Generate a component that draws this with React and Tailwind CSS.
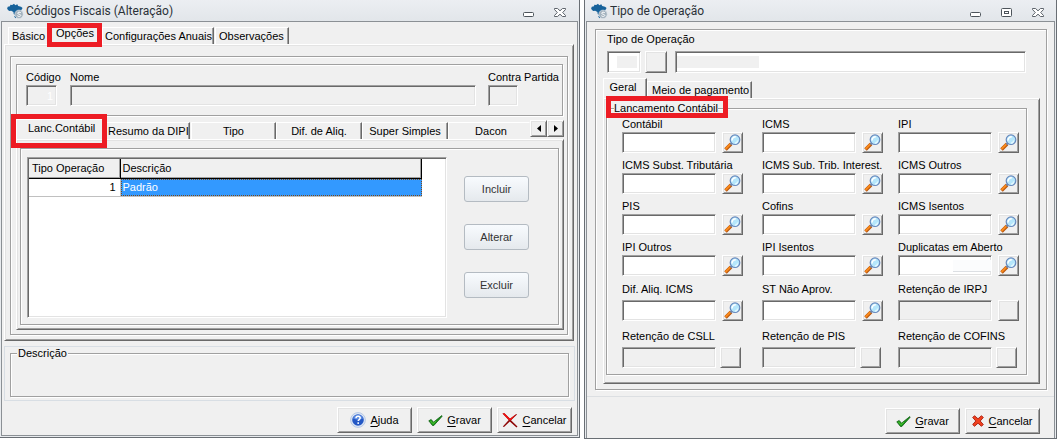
import { useState } from "react";

const ETCHED = "border border-[#a0a0a0] shadow-[1px_1px_0_#fff,inset_1px_1px_0_#fff]";
const SUNKEN =
  "border border-t-[#a0a0a0] border-l-[#a0a0a0] border-r-white border-b-white shadow-[inset_1px_1px_0_#696969,inset_-1px_-1px_0_#e3e3e3] outline-none";
const RAISED =
  "border border-t-white border-l-white border-r-[#696969] border-b-[#696969] shadow-[inset_1px_1px_0_#e3e3e3,inset_-1px_-1px_0_#a0a0a0] bg-[#f0f0f0]";
const TAB =
  "border-t border-l border-r border-t-white border-l-white border-r-[#696969] shadow-[inset_-1px_0_0_#a0a0a0] whitespace-nowrap";
const HIGHLIGHT = "absolute z-10 border-5 border-[#ed1c24] pointer-events-none";
const FIELD_GRID = "grid grid-cols-[minmax(0,140fr)_minmax(0,136fr)_minmax(0,121fr)] pl-[8px]";

const MAIN_TABS = [
  { label: "Básico", cls: "w-[39px] pl-[3px] text-left border-r-transparent shadow-none" },
  { label: "Opções", cls: "w-[55px] pl-[8px] text-left" },
  { label: "Configurações Anuais", cls: "w-[112px] pl-[2px] text-left" },
  { label: "Observações", cls: "ml-px w-[74px] pl-[3px] text-left" },
];

const SUB_TABS = [
  { label: "Lanc.Contábil", cls: "w-[88px] pl-[11px] text-left" },
  { label: "Resumo da DIPI", cls: "w-[86px] pl-[3px] text-left" },
  { label: "Tipo", cls: "ml-px w-[85px]" },
  { label: "Dif. de Aliq.", cls: "w-[86px]" },
  { label: "Super Simples", cls: "w-[86px]" },
  { label: "Dacon", cls: "min-w-0 flex-1 pl-1 border-r-transparent shadow-none" },
];

const FIELDS = [
  "Contábil", "ICMS", "IPI",
  "ICMS Subst. Tributária", "ICMS Sub. Trib. Interest.", "ICMS Outros",
  "PIS", "Cofins", "ICMS Isentos",
  "IPI Outros", "IPI Isentos", "Duplicatas em Aberto",
];

const EXTRA_FIELDS = [
  { label: "Dif. Aliq. ICMS" },
  { label: "ST Não Aprov." },
  { label: "Retenção de IRPJ", disabled: true },
  { label: "Retenção de CSLL", disabled: true, near: true },
  { label: "Retenção de PIS", disabled: true, near: true },
  { label: "Retenção de COFINS", disabled: true, near: true },
];

const COLUMN_PAD = ["pr-[19px]", "pr-[15px]", ""];

function AppIcon() {
  return (
    <svg width="17" height="16" viewBox="0 0 17 16" aria-hidden="true">
      <path
        d="M.8 3.800 3 3.200 3.300 1.800 5.200 2 7 .8l1.300 1.400 2-.9.9 1.600 2.800.9 1.600 1.300-1.500 2.300-.4 3-2.400 1.200-1.300 1.900-1.200 1.700-1.600-1.500 1-1.500-1.500-1.300-.3-2-2.200-1.100-1.900.1-1.300-1-.9-1.300z"
        fill="#17629b"
      />
      <circle cx="12" cy="11.300" r="4.200" fill="#a3b2be" stroke="#e3e8ec" strokeWidth=".6" />
      <path d="M13.800 9.700c-.8-.8-3.200-.7-3.200.5s3.200.9 3.200 2.200-2.700 1.300-3.500.3" fill="none" stroke="#fff" strokeWidth="1" />
    </svg>
  );
}

function MagnifierIcon() {
  return (
    <svg width="17" height="17" viewBox="0 0 17 17" aria-hidden="true">
      <path d="M1.500 15.500 7 10" stroke="#b5530c" strokeWidth="3.600" />
      <path d="M1.500 15 6.500 10" stroke="#f98a1c" strokeWidth="2" />
      <path d="m6.500 10.500 2-2" stroke="#6d7f9c" strokeWidth="2" />
      <circle cx="11" cy="5.700" r="4.800" fill="#b5e6fb" stroke="#6889bd" strokeWidth="1.200" />
      <path d="M8 6.500C8 4 9.500 2.800 11.800 2.800" fill="none" stroke="#fff" strokeWidth="1.500" />
      <path d="M13.500 6.500c0 1.500-1 2.500-2.500 2.700" fill="none" stroke="#e8faff" strokeWidth="1.200" />
    </svg>
  );
}

function CheckIcon() {
  return (
    <svg width="15" height="11" viewBox="0 0 15 11" aria-hidden="true">
      <path d="M.8 5.800 3.200 4.500l2.300 2.700L13.800.6l.2.800-8.200 9.100H4.500z" fill="#1c9c1c" stroke="#0c5a10" strokeWidth=".8" />
      <path d="m2.300 5.700 2.600 3 3-2.600" fill="none" stroke="#52c832" strokeWidth="1" />
    </svg>
  );
}

function ThinCrossIcon() {
  return (
    <svg width="16" height="15" viewBox="0 0 16 15" aria-hidden="true">
      <path d="M.5.500 2.500.300 8 5.800 14.300 1 15 1.500 9 7.300l6.500 6.200-1 .9-6.700-6L2 14 .8 13.600 6.800 7z" fill="#8d0505" />
      <path d="M.5.500 2.500.300 8 5.800 14.300 1 9 7.300H6.800z" fill="#ee1111" />
    </svg>
  );
}

function ThickCrossIcon() {
  return (
    <svg width="12" height="12" viewBox="0 0 12 12" aria-hidden="true">
      <path
        d="M2.500.700 6 3.800 9.500.700l1.800 1.800L8.200 6l3.100 3.500-1.800 1.800L6 8.200l-3.500 3.100L.7 9.500 3.800 6 .7 2.500z"
        fill="#f0411f"
        stroke="#a81c0c"
        strokeWidth=".9"
      />
    </svg>
  );
}

function HelpIcon() {
  return (
    <svg width="16" height="16" viewBox="0 0 16 16" aria-hidden="true">
      <circle cx="8" cy="8" r="7.400" fill="#dfe8f5" stroke="#a9bfe2" strokeWidth=".8" />
      <circle cx="8" cy="8" r="5.800" fill="#2458c5" />
      <path d="M3 6.500a5.200 5.200 0 0 1 10 0C10 8 6 8 3 6.500z" fill="#5b8be2" />
      <path d="M6 6.300c0-2.700 4.200-2.500 4.200-.2 0 1.500-2 1.500-2 3" fill="none" stroke="#fff" strokeWidth="1.500" />
      <rect x="7.400" y="10.300" width="1.600" height="1.600" fill="#fff" />
    </svg>
  );
}

function MinimizeIcon() {
  return (
    <svg width="11" height="11" viewBox="0 0 11 11" aria-hidden="true">
      <rect x=".5" y="5.500" width="10" height="4" rx="1" fill="#fff" stroke="#4d545b" />
    </svg>
  );
}

function MaximizeIcon() {
  return (
    <svg width="11" height="11" viewBox="0 0 11 11" aria-hidden="true">
      <rect x=".5" y="1.500" width="10" height="8" rx="1" fill="#fff" stroke="#4d545b" />
      <rect x="3.500" y="4.500" width="4" height="2" fill="#fff" stroke="#4d545b" />
    </svg>
  );
}

function CloseIcon() {
  return (
    <svg width="12" height="11" viewBox="0 0 12 11" aria-hidden="true">
      <path
        d="M.5 1.500h3L6 3.800l2.500-2.300h3v1L8.700 5.500l2.800 3v1h-3L6 7.200 3.500 9.500h-3v-1l2.800-3L.5 2.500z"
        fill="#fff"
        stroke="#4d545b"
        strokeWidth=".9"
      />
    </svg>
  );
}

function TitleBar({ title, maximize, pad }) {
  return (
    <header className={`flex h-[21px] items-center bg-linear-to-b from-[#eceef2] to-[#e2e6ea] ${pad}`}>
      <AppIcon />
      <h1 className="ml-[2px] flex-1 font-[Roboto,'Open_Sans',sans-serif] text-[12px] leading-[20px] text-[#2b3138]">{title}</h1>
      <div className="flex items-center gap-[20px] pt-[3px]">
        <button type="button" aria-label="Minimizar"><MinimizeIcon /></button>
        {maximize && <button type="button" aria-label="Maximizar"><MaximizeIcon /></button>}
        <button type="button" aria-label="Fechar"><CloseIcon /></button>
      </div>
    </header>
  );
}

function Tabs({ tabs, active, onSelect, children }) {
  return (
    <div role="tablist" className="flex h-[20px] items-end">
      {tabs.map((t, i) => (
        <button
          key={t.label}
          type="button"
          role="tab"
          aria-selected={active === i}
          onClick={() => onSelect(i)}
          className={`${TAB} ${t.cls} ${active === i ? "h-[20px] pb-1" : "h-[17px]"}`}
        >
          {t.label}
        </button>
      ))}
      {children}
    </div>
  );
}

function ActionButton({ icon, label }) {
  return (
    <button type="button" className={`${RAISED} flex h-[26px] w-[75px] items-center justify-center gap-1`}>
      {icon}
      <span>
        <span className="underline underline-offset-2">{label[0]}</span>
        {label.slice(1)}
      </span>
    </button>
  );
}

function Field({ id, label, column, disabled, near, spaced, patch }) {
  return (
    <div className={`relative ${COLUMN_PAD[column]}`}>
      <label htmlFor={id} className={`block leading-4 whitespace-nowrap ${spaced ? "mb-[3px]" : ""}`}>{label}</label>
      <div className={`flex ${near ? "gap-1 pr-[2px]" : "gap-[6px]"}`}>
        <input
          id={id}
          disabled={disabled}
          className={`${SUNKEN} h-[21px] min-w-0 flex-1 px-1 ${disabled ? "bg-[#f0f0f0]" : "bg-white"}`}
        />
        <button type="button" aria-label={`Pesquisar ${label}`} className={`${RAISED} flex size-[21px] shrink-0 items-center justify-center`}>
          {!disabled && <MagnifierIcon />}
        </button>
      </div>
      {patch && <div className="absolute right-[28px] bottom-[4px] h-[12px] w-[38px] border-b border-[#dcdfe3] bg-[#fbfcfd]" />}
    </div>
  );
}

function FiscalCodes() {
  const [tab, setTab] = useState(1);
  const [subTab, setSubTab] = useState(0);

  return (
    <section className="mr-px border-r border-b border-[#696e74] bg-[#e8ebee]">
      <TitleBar title="Códigos Fiscais (Alteração)" pad="pl-[7px] pr-[13px]" />
      <div className="mx-px mb-px border border-[#8b9095] bg-[#f0f0f0]">
        <div className="pt-[2px] pr-[3px] pl-[2px]">
          <div className="relative pl-1">
            <Tabs tabs={MAIN_TABS} active={tab} onSelect={setTab} />
            <div className={`${HIGHLIGHT} -top-px left-[43px] h-[24px] w-[55px]`} />
          </div>

          <div className={`${RAISED} px-[5px] pt-[11px] pb-[5px]`}>
            <div className={`${ETCHED} pt-[7px] pr-[3px] pb-1 pl-[5px]`}>
              <div className={`${ETCHED} mr-px flex pt-1 pr-[2px] pb-[9px] pl-[9px]`}>
                <div className="w-[44px]">
                  <label htmlFor="codigo" className="block leading-4">Código</label>
                  <input id="codigo" readOnly value="1" className={`${SUNKEN} block h-[21px] w-[31px] px-[3px] text-right text-white`} />
                </div>
                <div className="flex-1">
                  <label htmlFor="nome" className="block leading-4">Nome</label>
                  <input id="nome" disabled className={`${SUNKEN} block h-[21px] w-full`} />
                </div>
                <div className="ml-3 w-[72px]">
                  <label htmlFor="contra" className="block leading-4 whitespace-nowrap">Contra Partida</label>
                  <input id="contra" disabled className={`${SUNKEN} block h-[21px] w-[30px]`} />
                </div>
              </div>

              <div className="relative mt-[3px]">
                <Tabs tabs={SUB_TABS} active={subTab} onSelect={setSubTab}>
                  <div className="flex self-start pt-px">
                    <button type="button" aria-label="Anterior" className={`${RAISED} flex h-[17px] w-[17px] items-center justify-center`}>
                      <svg width="4" height="7" viewBox="0 0 4 7"><path d="M4 0v7L0 3.500z" /></svg>
                    </button>
                    <button type="button" aria-label="Próximo" className={`${RAISED} flex h-[17px] w-[17px] items-center justify-center`}>
                      <svg width="4" height="7" viewBox="0 0 4 7"><path d="M0 0v7l4-3.500z" /></svg>
                    </button>
                  </div>
                </Tabs>
                <div className={`${HIGHLIGHT} -top-[5px] -left-[5px] h-[34px] w-[96px]`} />
              </div>

              <div className={`${RAISED} pt-[8px] pr-1 pb-1 pl-[3px]`}>
                <div className={`${ETCHED} flex gap-[17px] pt-[8px] pr-[29px] pb-[6px] pl-[6px]`}>
                  <div className={`${SUNKEN} h-[161px] flex-1 bg-white p-px`}>
                    <table className="w-[393px] table-fixed border-collapse text-left">
                      <thead>
                        <tr className="h-[19px] bg-[#f0f0f0]">
                          <th className="w-[91px] border-r border-b border-black p-0 pl-[3px] font-normal shadow-[inset_-1px_-1px_0_#a0a0a0]">Tipo Operação</th>
                          <th className="border-r border-b border-black p-0 pl-[2px] font-normal shadow-[inset_-1px_-1px_0_#a0a0a0]">Descrição</th>
                        </tr>
                      </thead>
                      <tbody>
                        <tr className="h-[18px]">
                          <td className="border-r border-b border-[#c0c0c0] p-0 pr-1 text-right">1</td>
                          <td className="border-b border-[#c0c0c0] bg-[#3399ff] p-0 text-white">
                            <div className="h-[17px] border border-dotted border-[#7a4a1c] pl-px leading-[15px]">Padrão</div>
                          </td>
                        </tr>
                      </tbody>
                    </table>
                  </div>
                  <div className="flex flex-col gap-[22px] pt-[19px]">
                    {["Incluir", "Alterar", "Excluir"].map((label) => (
                      <button
                        key={label}
                        type="button"
                        className="h-[26px] w-[65px] rounded-[3px] border border-[#b4bbc2] bg-linear-to-b from-[#f8fbfe] to-[#e5e9ed] text-[#333]"
                      >
                        {label}
                      </button>
                    ))}
                  </div>
                </div>
              </div>
            </div>
          </div>
        </div>

        <div className="mt-[5px] mr-[2px] ml-[2px] border border-[#d8dee4] px-[5px] pb-[3px]">
          <fieldset className={`${ETCHED} h-[50px] pl-[6px]`}>
            <legend className="bg-[#f0f0f0] px-px leading-[12px]">Descrição</legend>
          </fieldset>
        </div>

        <footer className="flex justify-end gap-[5px] pt-[6px] pr-[5px] pb-[2px]">
          <ActionButton icon={<HelpIcon />} label="Ajuda" />
          <ActionButton icon={<CheckIcon />} label="Gravar" />
          <ActionButton icon={<ThinCrossIcon />} label="Cancelar" />
        </footer>
      </div>
    </section>
  );
}

function OperationType() {
  const [tab, setTab] = useState(0);
  const tabs = [
    { label: "Geral", cls: "w-[44px] pr-1" },
    { label: "Meio de pagamento", cls: "w-[105px] pl-1 text-left" },
  ];

  return (
    <section className="border-r border-b border-l border-[#696e74] bg-[#e8ebee]">
      <TitleBar title="Tipo de Operação" maximize pad="pl-[6px] pr-[12px]" />
      <div className="mx-px border border-b-0 border-[#8b9095] bg-[#f0f0f0]">
        <div className="pt-[7px] pr-[7px] pl-[8px]">
          <div className={`${ETCHED} pt-px pb-[5px]`}>
            <label htmlFor="tipo" className="ml-[11px] block leading-4">Tipo de Operação</label>
            <div className="mt-1 flex pr-[20px] pl-[11px]">
              <div className={`${SUNKEN} w-[34px] bg-white py-1 pr-[3px] pl-[9px]`}>
                <input id="tipo" className="block h-[12px] w-full bg-[#f0f0f0] outline-none" />
              </div>
              <button type="button" aria-label="Pesquisar tipo" className={`${RAISED} ml-1 size-[22px]`} />
              <div className={`${SUNKEN} ml-[8px] flex-1 bg-white p-1 pl-px`}>
                <input aria-label="Descrição do tipo" className="block h-[12px] w-[82px] bg-[#f0f0f0] outline-none" />
              </div>
            </div>

            <div className="mt-[5px] pr-[6px] pl-[7px]">
              <Tabs tabs={tabs} active={tab} onSelect={setTab} />
              <div className={`${RAISED} relative pt-[2px] pr-[12px] pb-[8px] pl-[2px]`}>
                <fieldset className={`${ETCHED} pr-[7px] pb-[6px] pl-[7px]`}>
                  <legend className="bg-[#f0f0f0] leading-[14px]">Lancamento Contábil</legend>
                  <div className={`${FIELD_GRID} gap-y-1 pt-px`}>
                    {FIELDS.map((label, i) => (
                      <Field key={label} id={`campo-${i}`} label={label} column={i % 3} patch={i === 11} />
                    ))}
                  </div>
                  <div className={`${FIELD_GRID} mt-[5px] gap-y-[7px]`}>
                    {EXTRA_FIELDS.map((f, i) => (
                      <Field key={f.label} id={`extra-${i}`} {...f} column={i % 3} spaced />
                    ))}
                  </div>
                </fieldset>
                <div className={`${HIGHLIGHT} -top-[3px] left-[2px] h-[22px] w-[122px]`} />
              </div>
            </div>
          </div>
        </div>

        <footer className="mt-[6px] flex justify-end gap-[5px] border-t border-[#dcdfe2] pt-[11px] pr-[14px] pb-1">
          <ActionButton icon={<CheckIcon />} label="Gravar" />
          <ActionButton icon={<ThickCrossIcon />} label="Cancelar" />
        </footer>
      </div>
    </section>
  );
}

export default function App() {
  return (
    <main className="grid grid-cols-[minmax(0,581fr)_minmax(0,473fr)] items-start gap-[3px] bg-white font-['Liberation_Sans',Arial,sans-serif] text-[11px] leading-[14px] text-black">
      <FiscalCodes />
      <OperationType />
    </main>
  );
}
